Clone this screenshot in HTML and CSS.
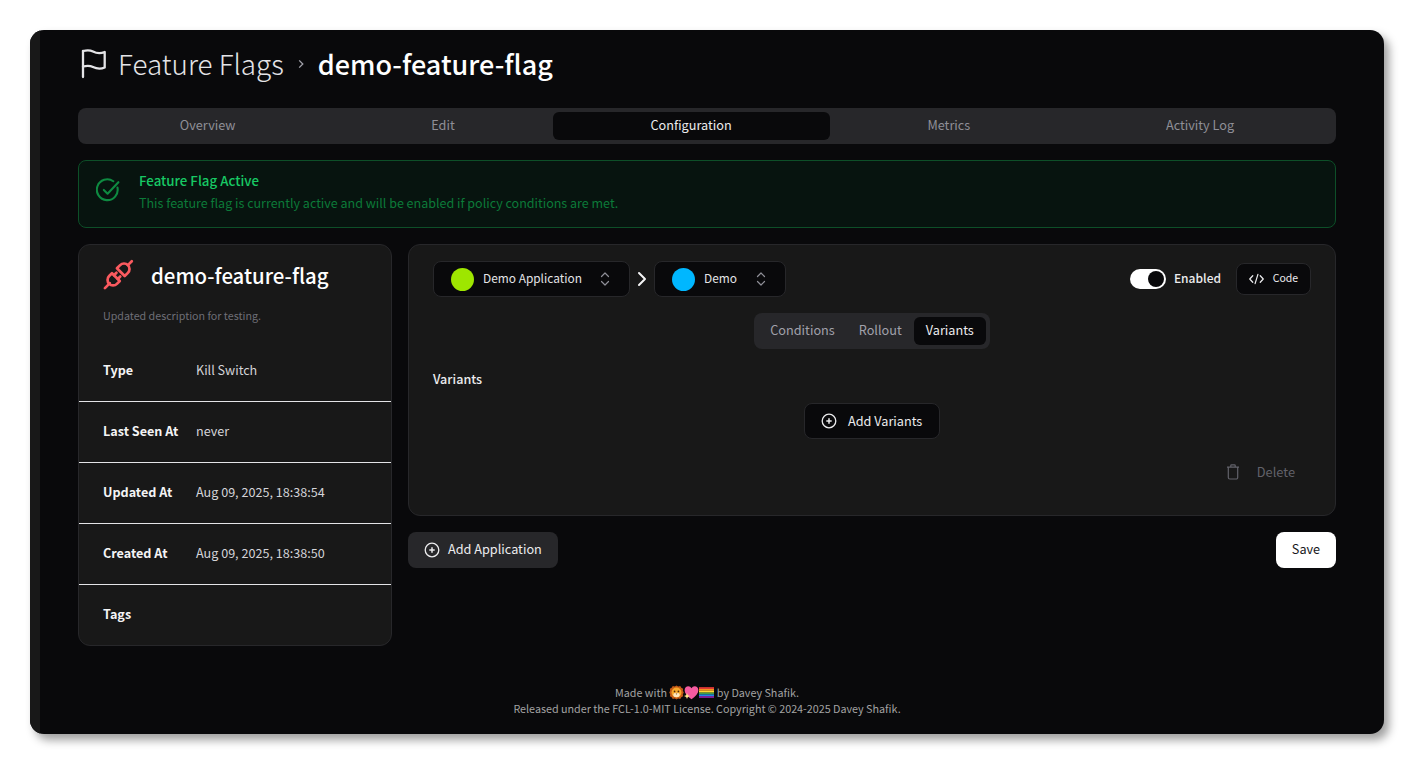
FILE: index.html
```html
<!DOCTYPE html>
<html>
<head>
  <link rel="stylesheet" href="styles.css">
</head>
<body>
  <div class="window">
    <div class="side-strip"></div>
    <div class="main">
      <div class="page-title">
        <svg class="flag-icon" viewBox="0 0 32 32" fill="none" stroke="currentColor" stroke-width="2.300" stroke-linecap="round" stroke-linejoin="round"><path d="M5 4v26"/><path d="M5 4C9 3 12 3 15 4.500C19 6.700 22 7 26.700 5V20.500C22 22.500 19 22 15 20C12 18.500 9 18.500 5 19.500"/></svg>
        <span class="crumb">Feature Flags</span>
        <svg class="crumb-sep" viewBox="0 0 8 10" fill="none" stroke="currentColor" stroke-width="1.100"><path d="M2.500 2l3 3-3 3"/></svg>
        <span class="crumb-current">demo-feature-flag</span>
      </div>

      <div class="tabs">
        <div class="tab">Overview</div>
        <div class="tab">Edit</div>
        <div class="tab active">Configuration</div>
        <div class="tab">Metrics</div>
        <div class="tab">Activity Log</div>
      </div>

      <div class="alert">
        <svg class="alert-icon" viewBox="0 0 24 24" fill="none" stroke="currentColor" stroke-width="2" stroke-linecap="round" stroke-linejoin="round"><path d="M20.600 9.200A10 10 0 1 1 16.600 3.100"/><path d="M7.500 11.500l3.600 3.600L21.500 4"/></svg>
        <div>
          <div class="alert-title">Feature Flag Active</div>
          <div class="alert-text">This feature flag is currently active and will be enabled if policy conditions are met.</div>
        </div>
      </div>

      <div class="columns">
        <div class="info-card">
          <div class="info-head">
            <svg class="plug-icon" viewBox="0 0 40 40" fill="none" stroke="currentColor" stroke-width="2.700" stroke-linecap="round" stroke-linejoin="round">
              <g transform="rotate(-45 20 20)">
                <path d="M1.500 20h7"/>
                <path d="M17 14.500v11h-4a5.500 5.500 0 0 1 0-11z"/>
                <path d="M17 17.300h3.500M17 22.700h3.500"/>
                <path d="M24 14.500h4.500a5.500 5.500 0 0 1 0 11h-4.500z"/>
                <path d="M34 20h5.500"/>
              </g>
            </svg>
            <span class="info-name">demo-feature-flag</span>
          </div>
          <div class="info-desc">Updated description for testing.</div>
          <div class="info-row"><b>Type</b><span>Kill Switch</span></div>
          <div class="info-row"><b>Last Seen At</b><span>never</span></div>
          <div class="info-row"><b>Updated At</b><span>Aug 09, 2025, 18:38:54</span></div>
          <div class="info-row"><b>Created At</b><span>Aug 09, 2025, 18:38:50</span></div>
          <div class="info-row"><b>Tags</b><span></span></div>
        </div>

        <div class="config-col">
          <div class="config-card">
            <div class="config-top">
              <div class="select app-select">
                <span class="dot dot-green"></span>
                <span class="select-label">Demo Application</span>
                <svg class="updown" viewBox="0 0 10 16" fill="none" stroke="currentColor" stroke-width="1.200" stroke-linecap="round" stroke-linejoin="round"><path d="M1.500 5.500L5 2l3.500 3.500M1.500 10.500L5 14l3.500-3.500"/></svg>
              </div>
              <svg class="arrow" viewBox="0 0 10 16" fill="none" stroke="currentColor" stroke-width="2" stroke-linecap="round" stroke-linejoin="round"><path d="M2 2l6 6-6 6"/></svg>
              <div class="select env-select">
                <span class="dot dot-blue"></span>
                <span class="select-label">Demo</span>
                <svg class="updown" viewBox="0 0 10 16" fill="none" stroke="currentColor" stroke-width="1.200" stroke-linecap="round" stroke-linejoin="round"><path d="M1.500 5.500L5 2l3.500 3.500M1.500 10.500L5 14l3.500-3.500"/></svg>
              </div>
              <div class="config-actions">
                <div class="switch"><span class="knob"></span></div>
                <span class="switch-label">Enabled</span>
                <div class="code-btn">
                  <svg class="code-icon" viewBox="0 0 16 12" fill="none" stroke="currentColor" stroke-width="1.300" stroke-linecap="round" stroke-linejoin="round"><path d="M4 2.500L.8 6 4 9.500M12 2.500L15.200 6 12 9.500M9.500 1L6.500 11"/></svg>
                  <span class="code-label">Code</span>
                </div>
              </div>
            </div>

            <div class="subtabs-wrap">
              <div class="subtabs">
                <div class="subtab">Conditions</div>
                <div class="subtab">Rollout</div>
                <div class="subtab active">Variants</div>
              </div>
            </div>

            <div class="variants-label">Variants</div>
            <div class="variants-action">
              <div class="btn btn-dark">
                <svg class="plus-icon" viewBox="0 0 16 16" fill="none" stroke="currentColor" stroke-width="1.300"><circle cx="8" cy="8" r="6.800"/><path d="M8 5.300v5.400M5.300 8h5.400" stroke-width="1.500"/></svg>
                <span class="btn-label">Add Variants</span>
              </div>
            </div>
            <div class="delete-row">
              <div class="delete-btn">
                <svg class="trash-icon" viewBox="0 0 14 16" fill="none" stroke="currentColor" stroke-width="1.200" stroke-linejoin="round"><path d="M1 3.200h12M2.300 3.200v10.300a1.500 1.500 0 0 0 1.500 1.500h6.400a1.500 1.500 0 0 0 1.500-1.500V3.200M4.800 3.200V1.500a.7.700 0 0 1 .7-.7h3a.7.700 0 0 1 .7.7v1.700"/></svg>
                <span class="btn-label">Delete</span>
              </div>
            </div>
          </div>

          <div class="config-footer">
            <div class="btn btn-grey">
              <svg class="plus-icon" viewBox="0 0 16 16" fill="none" stroke="currentColor" stroke-width="1.300"><circle cx="8" cy="8" r="6.800"/><path d="M8 5.300v5.400M5.300 8h5.400" stroke-width="1.500"/></svg>
              <span class="btn-label">Add Application</span>
            </div>
            <div class="btn btn-save"><span class="btn-label">Save</span></div>
          </div>
        </div>
      </div>

      <div class="footer">
        <div class="footer-line">Made with
          <svg class="emoji" viewBox="0 0 14 14"><path d="M7 .4l1.600 1 1.900-.4 1 1.600 1.700.9-.3 1.900.9 1.600-.9 1.700.3 1.900-1.700.9-1 1.600-1.900-.4L7 13.600l-1.600-1-1.900.4-1-1.600-1.700-.9.3-1.900L.2 6.900l.9-1.600-.3-1.900 1.700-.9 1-1.600 1.900.4z" fill="#c45a16"/><circle cx="7" cy="7" r="4.600" fill="#f7a92b"/><ellipse cx="7" cy="9.300" rx="3" ry="2.100" fill="#fde7bd"/><circle cx="5.200" cy="6" r=".8" fill="#4a2408"/><circle cx="8.800" cy="6" r=".8" fill="#4a2408"/><path d="M6.200 8h1.600L7 9z" fill="#7a3a10"/></svg><svg class="emoji" viewBox="0 0 14 14"><path d="M7 13.200C3 10.200.6 7.800.6 4.800.6 2.700 2.200 1.200 4 1.200c1.300 0 2.400.700 3 1.800.600-1.100 1.700-1.800 3-1.800 1.800 0 3.400 1.500 3.400 3.600 0 3-2.400 5.400-6.400 8.400z" fill="#f45ba0"/><path d="M2.800 7.500l.8 2 2 .8-2 .8-.8 2-.8-2-2-.8 2-.8z" fill="#ffe98a"/></svg><svg class="emoji flag-emoji" viewBox="0 0 14 10"><rect y="0" width="14" height="1.700" fill="#e53935"/><rect y="1.700" width="14" height="1.700" fill="#f59322"/><rect y="3.400" width="14" height="1.700" fill="#fdd835"/><rect y="5.100" width="14" height="1.700" fill="#43a047"/><rect y="6.800" width="14" height="1.600" fill="#1e88e5"/><rect y="8.400" width="14" height="1.600" fill="#8e24aa"/></svg>
          by Davey Shafik.</div>
        <div class="footer-line">Released under the FCL-1.0-MIT License. Copyright © 2024-2025 Davey Shafik.</div>
      </div>
    </div>
  </div>
</body>
</html>
```

FILE: styles.css
```css
body {
  margin: 0;
  padding: 30px 0 0 30px;
  min-height: 100vh;
  box-sizing: border-box;
  background-color: #fff;
  font-family: "Noto Sans CJK SC", "Noto Sans", sans-serif;
  color: #ececee;
}

.window {
  display: flex;
  width: 1354px;
  height: 704px;
  background-color: #09090b;
  border-radius: 14px;
  box-shadow: 5px 6px 10px rgba(0, 0, 0, 0.38);
  overflow: hidden;
}

.side-strip {
  width: 10px;
  background-color: #181818;
}

.main {
  flex: 1;
  padding: 11px 48px 0 38px;
  display: flex;
  flex-direction: column;
}

/* page title */
.page-title {
  display: flex;
  align-items: center;
  height: 44px;
  margin-bottom: 23px;
  color: #fff;
}

.flag-icon {
  width: 32px;
  height: 32px;
  margin-right: 8px;
  color: #e4e4e7;
}

.crumb {
  font-size: 27.800px;
  font-weight: 300;
  color: #e4e4e7;
}

.crumb-sep {
  width: 10px;
  height: 12px;
  margin: 2px 12px 0 12px;
  color: #a1a1aa;
}

.crumb-current {
  font-size: 27px;
  font-weight: 500;
}

/* tabs */
.tabs {
  display: flex;
  height: 36px;
  padding: 4px;
  box-sizing: border-box;
  background-color: #27272a;
  border-radius: 8px;
  margin-bottom: 16px;
}

.tab {
  flex: 1 1 auto;
  display: flex;
  align-items: center;
  justify-content: center;
  box-sizing: border-box;
  padding-bottom: 3px;
  font-size: 12.700px;
  color: #8f8f97;
  border-radius: 6px;
}

.tab.active {
  background-color: #09090b;
  color: #ececee;
}

/* alert */
.alert {
  display: flex;
  height: 68px;
  box-sizing: border-box;
  padding: 9px 17px;
  background-color: #07140f;
  border: 1px solid #0d4f28;
  border-radius: 8px;
  margin-bottom: 16px;
}

.alert-icon {
  width: 25px;
  height: 25px;
  margin: 8px 18px 0 0;
  color: #0e8a41;
}

.alert-title {
  font-size: 13.300px;
  font-weight: 500;
  line-height: 22px;
  color: #17c964;
}

.alert-text {
  font-size: 12.520px;
  line-height: 22px;
  color: #0c7a39;
}

/* columns */
.columns {
  display: flex;
  gap: 16px;
}

.info-card {
  width: 314px;
  height: 402px;
  box-sizing: border-box;
  background-color: #181818;
  border: 1px solid #27272a;
  border-radius: 12px;
  flex-shrink: 0;
}

.info-head {
  display: flex;
  align-items: center;
  height: 32px;
  padding: 14px 24px 1px 19px;
}

.plug-icon {
  width: 40px;
  height: 40px;
  margin-right: 13px;
  flex-shrink: 0;
  color: #fa5a5f;
}

.info-name {
  font-size: 20.400px;
  font-weight: 500;
  color: #fff;
}

.info-desc {
  font-size: 10.700px;
  color: #6f6f77;
  padding: 15px 24px 0 24px;
  line-height: 18px;
  height: 34px;
}

.info-row {
  display: flex;
  align-items: center;
  height: 61px;
  padding: 0 0 4px 24px;
  font-size: 12.600px;
  border-bottom: 1px solid #e4e4e7;
  box-sizing: border-box;
}

.info-row:last-child {
  border-bottom: none;
}

.info-row b {
  width: 93px;
  font-weight: 700;
  color: #f4f4f5;
}

.info-row span {
  color: #d4d4d8;
}

.config-col {
  flex: 1;
}

.config-card {
  height: 272px;
  box-sizing: border-box;
  background-color: #181818;
  border: 1px solid #27272a;
  border-radius: 12px;
  padding: 16px 24px;
}

.config-top {
  display: flex;
  align-items: center;
  height: 36px;
}

.select {
  display: flex;
  align-items: center;
  height: 36px;
  box-sizing: border-box;
  background-color: #09090b;
  border: 1px solid #27272a;
  border-radius: 8px;
  padding-left: 17px;
  font-size: 11.900px;
  color: #e4e4e7;
}

.app-select {
  width: 197px;
}

.env-select {
  width: 132px;
}

.dot {
  width: 23px;
  height: 23px;
  border-radius: 50%;
  margin-right: 9px;
  flex-shrink: 0;
}

.dot-green {
  background-color: #9ee600;
}

.dot-blue {
  background-color: #00b7ff;
}

.select-label {
  flex: 1;
  padding-bottom: 3px;
}

.updown {
  width: 10px;
  height: 16px;
  margin-right: 19px;
  color: #8f8f97;
}

.arrow {
  width: 10px;
  height: 16px;
  margin: 0 7px;
  color: #f4f4f5;
}

.config-actions {
  margin-left: auto;
  display: flex;
  align-items: center;
}

.switch {
  width: 36px;
  height: 20px;
  background-color: #fff;
  border-radius: 10px;
  display: flex;
  justify-content: flex-end;
  align-items: center;
  padding: 0 2px;
  box-sizing: border-box;
  margin-right: 8px;
}

.knob {
  width: 16px;
  height: 16px;
  background-color: #09090b;
  border-radius: 50%;
}

.switch-label {
  font-size: 12px;
  font-weight: 500;
  padding-bottom: 3px;
  margin-right: 15px;
}

.code-btn {
  display: flex;
  align-items: center;
  justify-content: center;
  gap: 9px;
  width: 75px;
  height: 32px;
  box-sizing: border-box;
  background-color: #09090b;
  border: 1px solid #27272a;
  border-radius: 8px;
  font-size: 10.500px;
}

.code-label {
  padding-bottom: 3px;
}

.code-icon {
  width: 15px;
  height: 12px;
}

.subtabs-wrap {
  display: flex;
  justify-content: center;
  margin-top: 16px;
}

.subtabs {
  display: flex;
  align-items: center;
  height: 36px;
  padding: 4px;
  box-sizing: border-box;
  background-color: #27272a;
  border-radius: 8px;
}

.subtab {
  display: flex;
  align-items: center;
  height: 28px;
  box-sizing: border-box;
  padding: 0 12px 3px;
  font-size: 12.700px;
  color: #a1a1aa;
  border-radius: 6px;
}

.subtab.active {
  background-color: #09090b;
  color: #ececee;
}

.variants-label {
  margin-top: 20px;
  font-size: 12.600px;
  font-weight: 500;
  line-height: 20px;
  color: #ececee;
}

.variants-action {
  display: flex;
  justify-content: center;
  margin-top: 14px;
}

.btn {
  display: flex;
  align-items: center;
  height: 36px;
  box-sizing: border-box;
  border-radius: 8px;
  font-size: 12.700px;
  color: #ececee;
}

.btn-label {
  padding-bottom: 3px;
}

.btn-dark .btn-label,
.delete-btn .btn-label {
  padding-bottom: 1px;
}

.btn-dark {
  width: 136px;
  padding-left: 16px;
  background-color: #09090b;
  border: 1px solid #27272a;
}

.btn-grey {
  width: 150px;
  padding-left: 16px;
  background-color: #27272a;
}

.btn-save {
  width: 60px;
  justify-content: center;
  background-color: #fff;
  color: #18181b;
}

.plus-icon {
  width: 16px;
  height: 16px;
  margin-right: 11px;
}

.btn-grey .plus-icon {
  margin-right: 8px;
}

.delete-row {
  display: flex;
  justify-content: flex-end;
  margin-top: 23px;
}

.delete-btn {
  display: flex;
  align-items: center;
  height: 20px;
  padding-right: 16px;
  font-size: 12.800px;
  color: #62626a;
}

.trash-icon {
  width: 14px;
  height: 16px;
  margin-right: 17px;
}

.config-footer {
  display: flex;
  justify-content: space-between;
  margin-top: 16px;
}

/* footer */
.footer {
  margin-top: 39px;
  text-align: center;
  font-size: 10.750px;
  line-height: 16px;
  color: #a3a3a3;
}

.footer-line {
  white-space: nowrap;
}

.emoji {
  width: 15px;
  height: 15px;
  vertical-align: -3px;
}

.flag-emoji {
  height: 11px;
  vertical-align: -1px;
}
```
